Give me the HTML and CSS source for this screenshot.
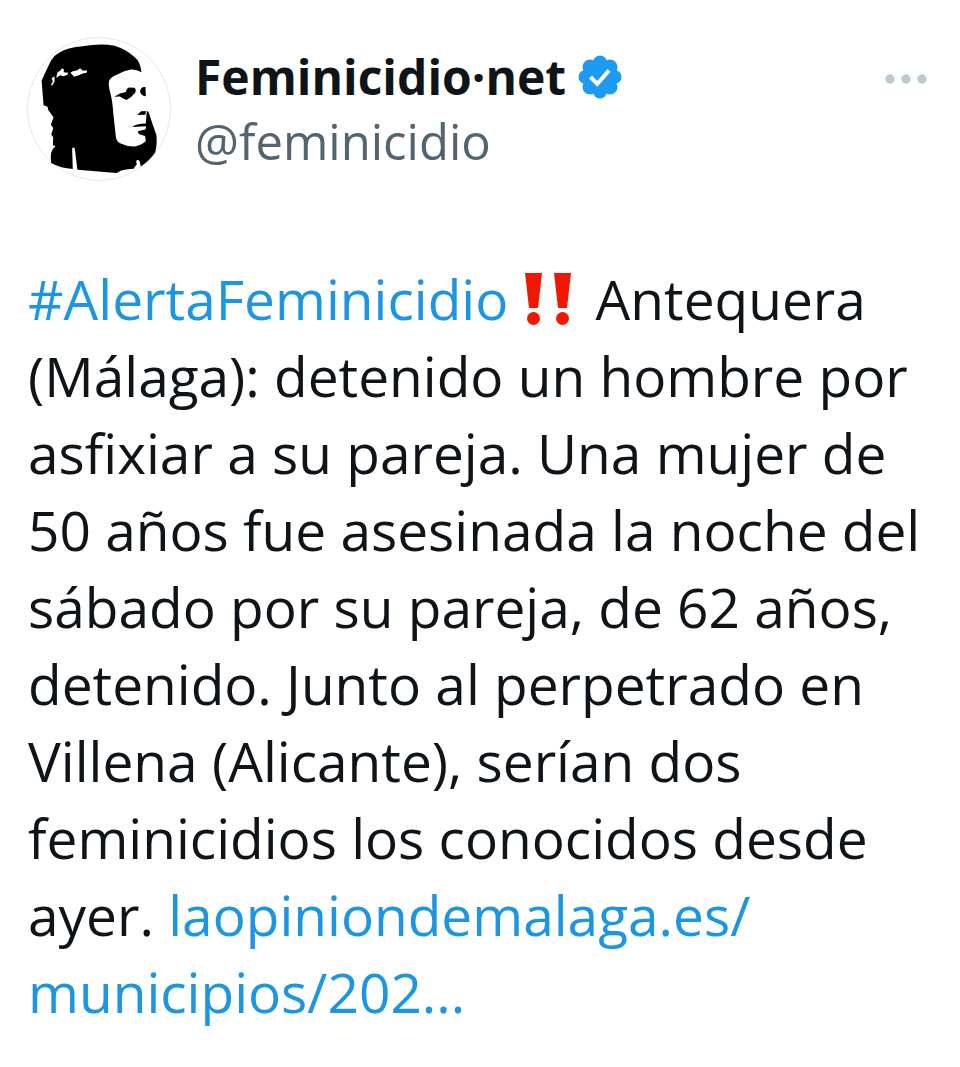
FILE: index.html
```html
<!DOCTYPE html>
<html lang="es">
<head>
  <meta charset="UTF-8" />
  <meta name="viewport" content="width=device-width, initial-scale=1.0" />
  <title>Feminicidio·net</title>
  <link rel="stylesheet" href="styles.css">
</head>
<body>
  <article class="tweet">
    <header class="tweet-header">
      <svg class="avatar" viewBox="20 20 434 434" role="img" aria-label="Feminicidio·net">
        <circle cx="237" cy="237" r="215" fill="#fff" stroke="#e4e6e8" stroke-width="3" />
        <!-- hood -->
        <path d="M64 152 L72 134 L88 100 Q98 78 118 67 Q145 50 188 48 Q240 38 284 46 Q318 56 344 80 Q362 94 365 126 Q350 117 333 118 Q312 121 294 132 Q274 140 268 150 Q264 164 270 184 Q278 212 280 250 L288 322 Q290 336 304 342 Q324 351 345 350 Q368 344 378 334 L376 318 L358 313 Q352 307 356 303 L377 299 L379 289 L337 291 Q348 282 378 281 L381 243 L386 245 Q396 276 410 315 Q413 345 406 368 Q390 392 363 410 L359 394 Q354 388 349 394 L351 404 Q344 409 342 417 Q324 418 304 422 L290 430 L172 420 L164 356 Q159 350 156 356 L158 418 Q122 416 93 400 Q90 380 93 368 Q96 356 106 349 L98 346 L99 322 L93 314 L99 295 L92 284 L100 262 L84 240 L82 230 L70 226 Z" />
        <!-- eyes and nose -->
        <path d="M283 200 Q300 188 318 186 Q320 174 328 172 L344 173 Q350 178 346 188 Q336 201 320 210 Q308 204 300 199 Z" />
        <path d="M377 171 L378 198 Q370 200 364 192 Q358 184 364 175 Q369 170 377 171 Z" />
        <path d="M352 255 L364 244 L378 243 L377 254 Z" />
        <!-- highlights on the hood -->
        <path fill="#fff" d="M94 144 L103 138 L103 155 L96 166 L92 165 L98 153 Z M109 138 L112 126 L120 122 L126 114 L132 119 L130 126 L144 128 L142 134 L130 138 L120 135 L109 143 Z M151 128 L158 123 L172 120 L180 114 L187 121 L201 121 L200 128 L188 130 L174 136 L162 140 Z" />
      </svg>
      <div class="author">
        <div class="name-row">
          <h1 class="name">Feminicidio·net</h1>
          <svg class="verified" viewBox="0 0 44 44" role="img" aria-label="Cuenta verificada">
            <g fill="#1d9bf0">
              <circle cx="22" cy="22" r="17" />
              <circle cx="22" cy="7.5" r="7" />
              <circle cx="32" cy="12" r="7.5" />
              <circle cx="36.5" cy="22" r="7" />
              <circle cx="32" cy="32" r="7.5" />
              <circle cx="22" cy="36.5" r="7" />
              <circle cx="12" cy="32" r="7.5" />
              <circle cx="7.5" cy="22" r="7" />
              <circle cx="12" cy="12" r="7.5" />
            </g>
            <path d="M12.5 22 L19.3 28.8 L31 15.5" fill="none" stroke="#fff" stroke-width="4" />
          </svg>
        </div>
        <a class="handle" href="#">@feminicidio</a>
      </div>
      <button class="more" type="button" aria-label="Más opciones">
        <svg viewBox="0 0 42 10" width="42" height="10" fill="#b9cad3">
          <circle cx="5" cy="5" r="4.7" />
          <circle cx="21" cy="5" r="4.7" />
          <circle cx="37" cy="5" r="4.7" />
        </svg>
      </button>
    </header>

    <p class="tweet-text">
      <a href="#">#AlertaFeminicidio</a><svg class="emoji" viewBox="0 0 46 52" role="img" aria-label="‼️" fill="#f01800">
        <path d="M0 0 H17 L13 35 H4 Z M29 0 H46 L42 35 H33 Z" />
        <circle cx="8.5" cy="45.5" r="6.5" />
        <circle cx="37.5" cy="45.5" r="6.5" />
      </svg> Antequera<br>
      (Málaga): detenido un hombre por<br>
      asfixiar a su pareja. Una mujer de<br>
      50 años fue asesinada la noche del<br>
      sábado por su pareja, de 62 años,<br>
      detenido. Junto al perpetrado en<br>
      Villena (Alicante), serían dos<br>
      feminicidios los conocidos desde<br>
      ayer. <a href="#">laopiniondemalaga.es/<br>
      municipios/202...</a>
    </p>
  </article>
</body>
</html>
```

FILE: styles.css
```css
body {
  margin: 0;
  background-color: #fff;
  color: #0f1419;
  font-family: "Open Sans", "Noto Sans", sans-serif;
}
a {
  color: #1d96e2;
  text-decoration: none;
}
.tweet {
  padding: 37px 28px 32px;
}
.tweet-header {
  display: flex;
  align-items: flex-start;
  margin-left: -1px;
}
.avatar {
  width: 144px;
  height: 144px;
  flex: none;
}
.author {
  flex: 1;
  margin-left: 24px;
  padding-top: 8px;
}
.name-row {
  display: flex;
  align-items: center;
  gap: 12px;
}
.name {
  margin: 0;
  font-size: 48px;
  line-height: 64px;
  font-weight: 700;
}
.verified {
  width: 44px;
  height: 44px;
}
.handle {
  display: block;
  font-size: 49px;
  line-height: 64px;
  color: #536471;
}
.more {
  margin-top: 37px;
  margin-right: 5px;
  padding: 0;
  border: none;
  background: none;
  line-height: 0;
}
.tweet-text {
  margin: 79px 0 0;
  font-size: 55px;
  line-height: 77px;
  white-space: nowrap;
}
.emoji {
  width: 46px;
  height: 52px;
  margin: 0 10px 0 17px;
  vertical-align: -5px;
}
```
